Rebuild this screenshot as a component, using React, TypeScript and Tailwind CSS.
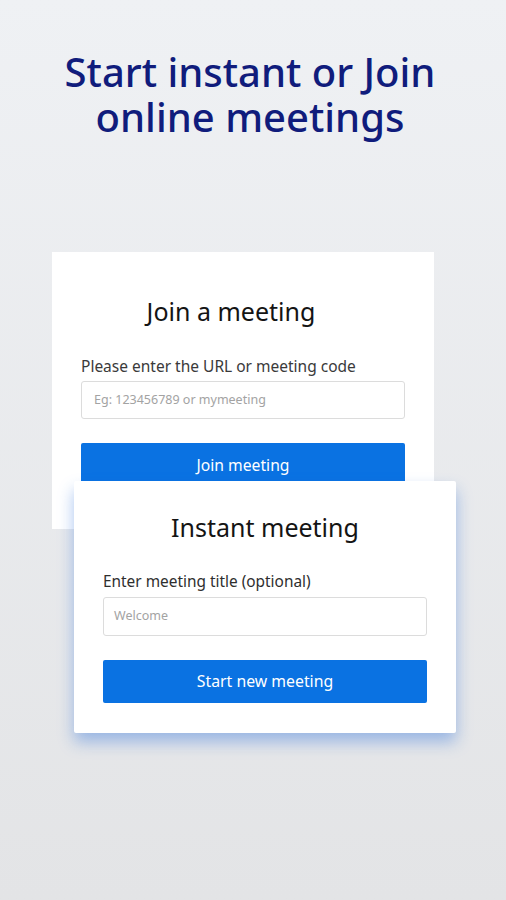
import React from "react";

export default function App() {
  return (
    <div
      className="w-[506px] h-[900px] overflow-hidden bg-gradient-to-b from-[#eff1f4] to-[#e3e4e6]"
      style={{ fontFamily: '"Noto Sans", "Open Sans", sans-serif' }}
    >
      <h1 className="pt-[49px] pr-[6px] flex flex-col items-center text-[40px] leading-[45px] font-medium text-[#101c7c]">
        <span>Start instant or Join</span>
        <span>online meetings</span>
      </h1>

      <div className="mt-[113px] ml-[52px] w-[382px] h-[277px] bg-white pt-[42px] px-[29px]">
        <h2 className="text-center text-[25px] leading-[34px] text-[#141414] pr-[24px]">Join a meeting</h2>
        <div className="mt-[28px] text-[15.5px] leading-[20px] text-[#3a3a3a]">Please enter the URL or meeting code</div>
        <div className="mt-[5px] h-[38px] rounded-[3px] border border-[#dcdcdc] flex items-center px-[12px] text-[12.5px] text-[#a3a3a3]">
          Eg: 123456789 or mymeeting
        </div>
        <div className="mt-[24px] h-[46px] rounded-[2px] bg-[#0a72e2] flex items-center justify-center text-white text-[15.7px]">
          Join meeting
        </div>
      </div>

      <div className="relative -mt-[48px] ml-[74px] w-[382px] h-[252px] bg-white rounded-[2px] pt-[29px] px-[29px] shadow-[0_9px_16px_rgba(40,110,220,0.4)]">
        <h2 className="text-center text-[25px] leading-[34px] text-[#141414]">Instant meeting</h2>
        <div className="mt-[28px] text-[15.4px] leading-[20px] text-[#2e2e2e]">Enter meeting title (optional)</div>
        <div className="mt-[5px] h-[39px] rounded-[3px] border border-[#dcdcdc] flex items-center px-[10px] text-[12.5px] text-[#a3a3a3]">
          Welcome
        </div>
        <div className="mt-[24px] h-[43px] rounded-[2px] bg-[#0a72e2] flex items-center justify-center text-white text-[15.8px]">
          Start new meeting
        </div>
      </div>
    </div>
  );
}
